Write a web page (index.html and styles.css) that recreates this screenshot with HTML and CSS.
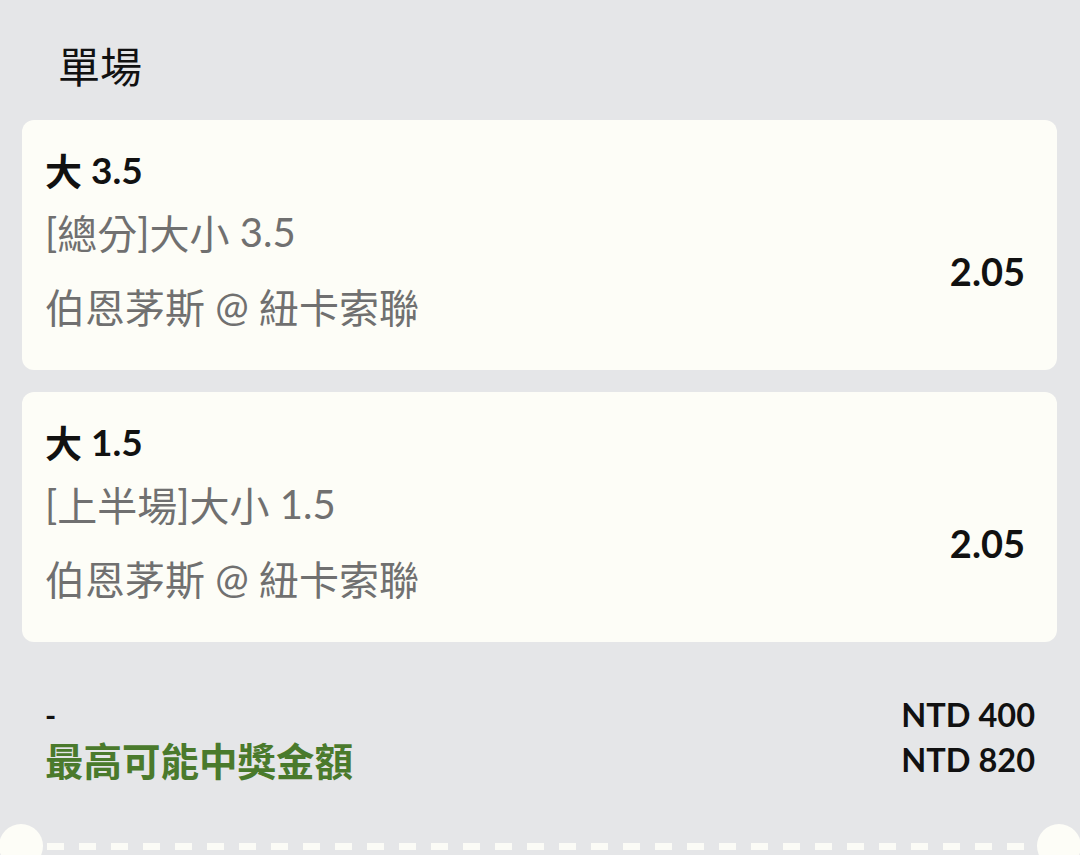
FILE: index.html
```html
<!DOCTYPE html>
<html lang="zh-Hant">
    <head>
        <meta charset="UTF-8">
        <title>單場</title>
        <meta name="viewport" content="width=device-width,initial-scale=1.0">
        <link rel="stylesheet" href="styles.css">
    </head>
    <body>
        <div class="pageHead">單場</div>
        <div class="betList">
            <div class="betCard">
                <div class="betPick"><span class="cjk">大</span> 3.5</div>
                <div class="betMarket">[<span class="cjk">總分</span>]<span class="cjk">大小</span> 3.5</div>
                <div class="betMatch"><span class="cjk">伯恩茅斯</span> @ <span class="cjk">紐卡索聯</span></div>
                <div class="betOdds">2.05</div>
            </div>
            <div class="betCard">
                <div class="betPick"><span class="cjk">大</span> 1.5</div>
                <div class="betMarket">[<span class="cjk">上半場</span>]<span class="cjk">大小</span> 1.5</div>
                <div class="betMatch"><span class="cjk">伯恩茅斯</span> @ <span class="cjk">紐卡索聯</span></div>
                <div class="betOdds">2.05</div>
            </div>
        </div>
        <div class="summary">
            <div class="summaryLabel">-</div>
            <div class="summaryValue">NTD 400</div>
            <div class="summaryLabel win">最高可能中獎金額</div>
            <div class="summaryValue">NTD 820</div>
        </div>
        <div class="ticketEdge">
            <div class="notch"></div>
            <div class="dashes"></div>
            <div class="notch"></div>
        </div>
    </body>
</html>
```
FILE: styles.css
```css
html, body{
    margin: 0;
    padding: 0;
}
body{
    width: 1080px;
    height: 855px;
    overflow: hidden;
    background: #e5e6e8;
    font-family: Lato, "Noto Sans CJK TC", sans-serif;
    color: #111111;
}
.cjk{
    font-family: "Noto Sans CJK TC", sans-serif;
}
.pageHead{
    height: 120px;
    box-sizing: border-box;
    padding: 8px 0 0 58px;
    display: flex;
    align-items: center;
    font-family: "Noto Sans CJK TC", sans-serif;
    font-size: 42px;
    color: #111111;
}
.betList{
    display: flex;
    flex-direction: column;
    gap: 22px;
    margin: 0 23px 0 22px;
}
.betCard{
    background: #fdfdf7;
    border-radius: 12px;
    height: 250px;
    box-sizing: border-box;
    padding: 24px 32px 26px 23px;
    display: grid;
    grid-template-columns: 1fr auto;
    grid-template-rows: 51px 74px 74px;
}
.betPick{
    grid-column: 1;
    grid-row: 1;
    display: flex;
    align-items: center;
    white-space: pre;
    font-weight: 700;
    font-size: 37px;
}
.betMarket, .betMatch{
    grid-column: 1;
    display: flex;
    align-items: center;
    white-space: pre;
    font-size: 40px;
    color: #707070;
}
.betMarket{
    grid-row: 2;
}
.betMatch{
    grid-row: 3;
}
.betOdds{
    grid-column: 2;
    grid-row: 2 / 4;
    align-self: center;
    padding-top: 3px;
    font-weight: 700;
    font-size: 38px;
}
.summary{
    margin: 50px 45px 0 45px;
    display: grid;
    grid-template-columns: 1fr auto;
    grid-template-rows: 45px 44px;
    align-items: center;
}
.summaryLabel{
    font-weight: 700;
    font-size: 30px;
}
.summaryLabel.win{
    font-family: "Noto Sans CJK TC", sans-serif;
    font-size: 38.5px;
    color: #4a7a2c;
}
.summaryValue{
    text-align: right;
    font-weight: 700;
    font-size: 32.5px;
}
.ticketEdge{
    margin: 43px -1px 0 -1px;
    display: flex;
    align-items: center;
}
.notch{
    width: 44px;
    height: 44px;
    border-radius: 50%;
    background: #fdfdf7;
    flex: none;
}
.dashes{
    flex: 1;
    height: 7px;
    margin: 0 4px;
    background: repeating-linear-gradient(90deg, #fbfbf6 0 17px, transparent 17px 32px);
}
```
